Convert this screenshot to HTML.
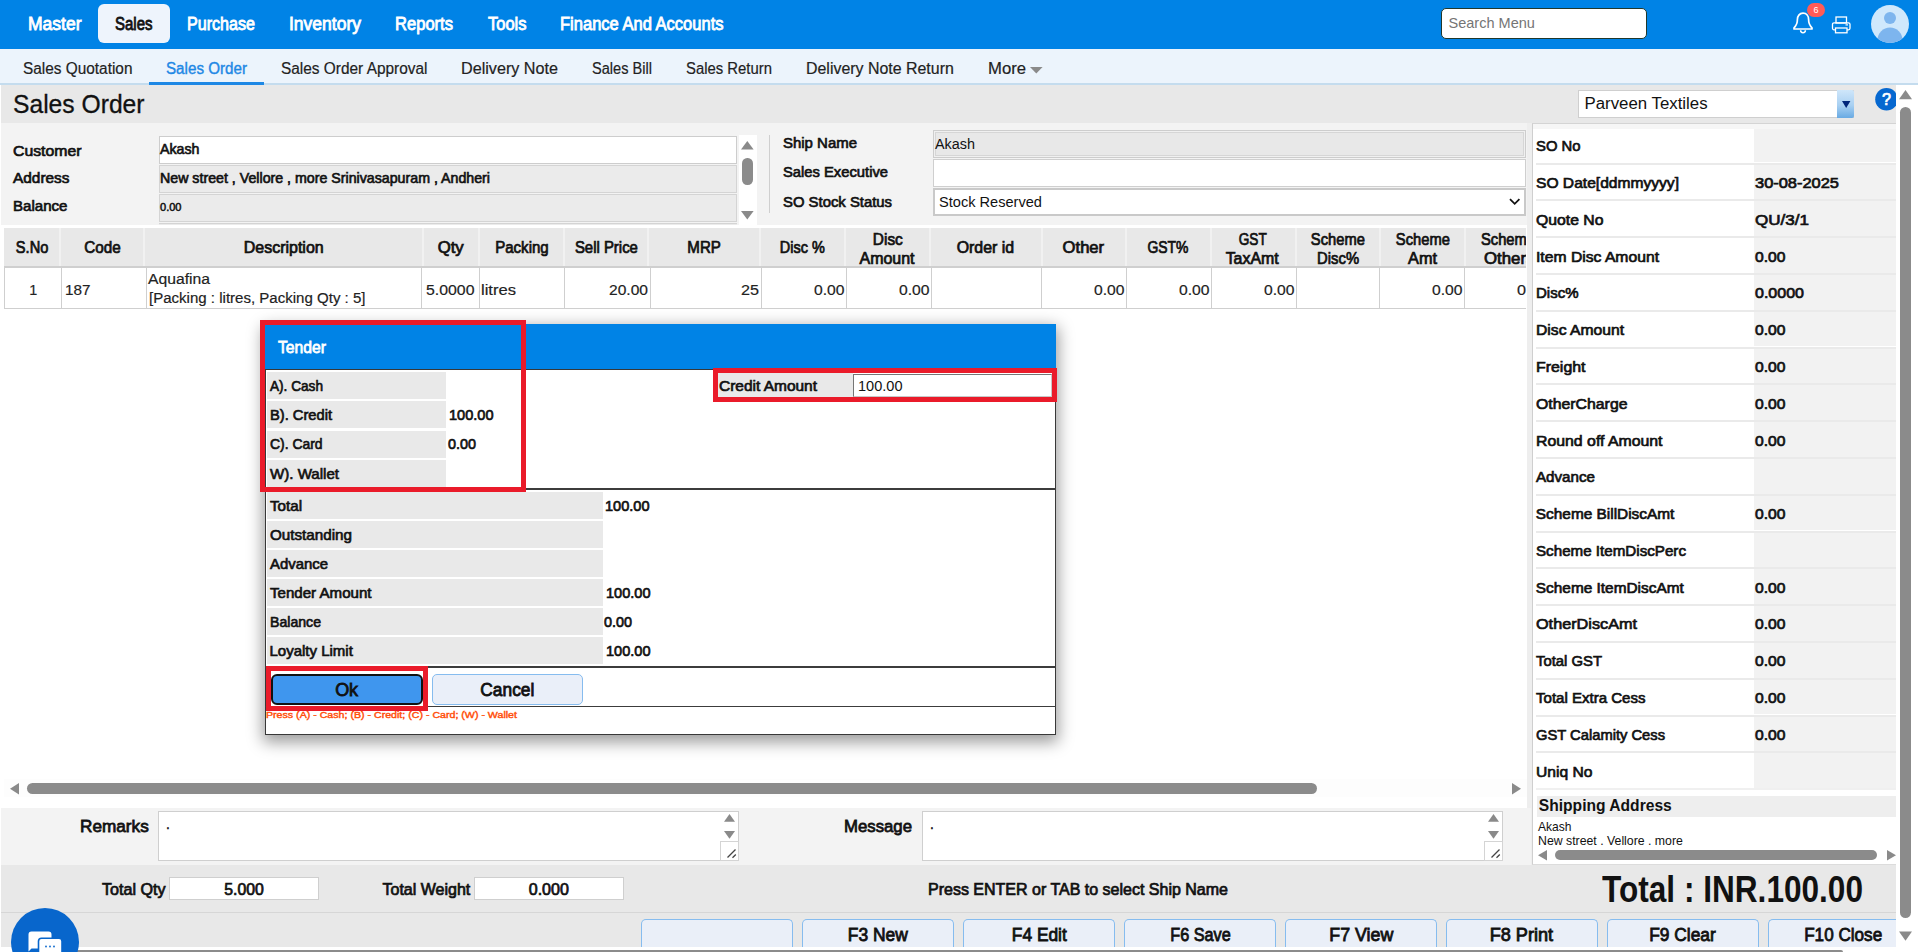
<!DOCTYPE html>
<html><head><meta charset="utf-8"><title>Sales Order</title>
<style>
html,body{margin:0;padding:0;}
body{width:1918px;height:952px;overflow:hidden;position:relative;background:#fff;font-family:"Liberation Sans",sans-serif;}
.a{position:absolute;box-sizing:border-box;}
.t{position:absolute;white-space:nowrap;}
svg{position:absolute;overflow:visible;}
#modal{position:absolute;left:0;top:0;}
</style></head><body>
<!-- top bar -->
<div class="a" style="left:0;top:0;width:1918px;height:48.6px;background:#0083E6"></div>
<div class="a" style="left:98px;top:4px;width:72px;height:39px;border-radius:6px;background:#EEF4FC"></div>
<div class="a" style="left:1441px;top:8px;width:205.5px;height:30.5px;border-radius:5px;background:#fff;border:1px solid #20382c"></div>

<svg style="left:1792px;top:11px" width="22" height="24" viewBox="0 0 22 24"><path d="M11 2.2c-3.6 0-5.6 2.9-5.6 6.4 0 4.6-1.6 6.6-3.4 8.2v1.2h18v-1.2c-1.8-1.6-3.4-3.600-3.400-8.200 0-3.500-2-6.400-5.600-6.400z" fill="none" stroke="#fff" stroke-width="1.7" stroke-linejoin="round"/><path d="M8.600 19.300a2.400 2.400 0 0 0 4.800 0" fill="none" stroke="#fff" stroke-width="1.5"/></svg>
<div class="a" style="left:1807px;top:3px;width:18px;height:14px;border-radius:7px;background:#FF5B57"></div>
<svg style="left:1831px;top:15px" width="21" height="20" viewBox="0 0 21 20"><rect x="5" y="2" width="10.500" height="6" fill="none" stroke="#fff" stroke-width="1.300"/><rect x="1.500" y="7.800" width="17.500" height="7" rx="1.500" fill="none" stroke="#fff" stroke-width="1.300"/><rect x="4.500" y="13" width="11.500" height="4.800" fill="#0083E6" stroke="#fff" stroke-width="1.300"/><rect x="14.500" y="9.300" width="2.500" height="1.200" fill="#fff"/></svg>
<svg style="left:1871px;top:5px" width="38" height="38" viewBox="0 0 38 38"><defs><clipPath id="av"><circle cx="19" cy="19" r="19"/></clipPath></defs><circle cx="19" cy="19" r="19" fill="#CFE8FC"/><g clip-path="url(#av)"><circle cx="19" cy="13" r="6" fill="#7DB5EE"/><ellipse cx="19" cy="35" rx="12.500" ry="12.500" fill="#7DB5EE"/></g></svg>

<!-- submenu -->
<div class="a" style="left:0;top:48.6px;width:1918px;height:35.4px;background:#ECF4FC"></div>
<div class="a" style="left:0;top:83px;width:1918px;height:1.6px;background:#C4DCEE"></div>
<div class="a" style="left:149px;top:82px;width:115px;height:2.8px;background:#1E88E5"></div>
<svg style="left:1030px;top:66.6px" width="13" height="7"><path d="M0 0H12.6L6.3 6.6Z" fill="#8a8a8a"/></svg>
<!-- title band -->
<div class="a" style="left:1px;top:84.8px;width:1895px;height:38px;background:#E8E8E8"></div>
<div class="a" style="left:1896px;top:84.8px;width:22px;height:867.2px;background:#fff;"></div>
<svg style="left:1899px;top:90px" width="13" height="10"><path d="M0 9.200L6.500 0L13 9.200Z" fill="#8a8a8a"/></svg>
<div class="a" style="left:1900px;top:107px;width:11px;height:810.5px;background:#8B8B8B;border-radius:5.500px;"></div>
<svg style="left:1899px;top:931px" width="13" height="10"><path d="M0 0.500H13L6.500 9.700Z" fill="#8a8a8a"/></svg>
<div class="a" style="left:1578px;top:90px;width:276px;height:27.5px;background:#fff;border:1px solid #cfcfcf;"></div>
<div class="a" style="left:1836.5px;top:90px;width:17.5px;height:28px;background:linear-gradient(#cfe6fa,#a8d0f2 55%,#68aae3);border-radius:0 2px 2px 0;"></div>
<svg style="left:1841.500px;top:101px" width="9" height="7"><path d="M0 0H8.400L4.200 7Z" fill="#00267a"/></svg>
<svg style="left:1875px;top:88px;overflow:hidden" width="21" height="23" viewBox="0 0 21 23"><circle cx="11.500" cy="11.300" r="11.300" fill="#0668D0"/></svg>
<div class="a" style="left:1px;top:122.8px;width:1530px;height:102.2px;background:#F3F3F3;"></div>
<div class="a" style="left:1527px;top:122.8px;width:4.5px;height:742.2px;background:#EEEEEE;"></div>
<div class="a" style="left:159px;top:136px;width:578px;height:27.5px;background:#fff;border:1px solid #cdcdcd;"></div>
<div class="a" style="left:159px;top:165px;width:578px;height:27.5px;background:#EBEBEB;border:1px solid #d4d4d4;"></div>
<div class="a" style="left:159px;top:194px;width:578px;height:27.5px;background:#EBEBEB;border:1px solid #d4d4d4;"></div>
<div class="a" style="left:159px;top:222.5px;width:578px;height:2.5px;background:#EBEBEB;border-top:1px solid #d4d4d4;"></div>
<div class="a" style="left:739px;top:135px;width:17.5px;height:90px;background:#fff;"></div>
<svg style="left:741px;top:141px" width="13" height="9"><path d="M0 8.600L6.300 0L12.600 8.600Z" fill="#8a8a8a"/></svg>
<div class="a" style="left:742px;top:158px;width:10.5px;height:26.5px;background:#8B8B8B;border-radius:5.200px;"></div>
<svg style="left:741px;top:210.500px" width="13" height="9"><path d="M0 0H12.600L6.300 8.600Z" fill="#8a8a8a"/></svg>
<div class="a" style="left:768.5px;top:135px;width:1.3px;height:77.5px;background:#cfcfcf;"></div>
<div class="a" style="left:933px;top:130px;width:593px;height:27.5px;background:#E8E8E8;border:1px solid #cdcdcd;box-shadow:inset 0 0 0 1px #f0f0f0, inset 0 0 0 2px #d6d6d6;"></div>
<div class="a" style="left:933px;top:159px;width:593px;height:28px;background:#fff;border:1px solid #cfcfcf;"></div>
<div class="a" style="left:933px;top:188px;width:593px;height:28px;background:#fff;border:2px solid #c9c9c9;"></div>
<svg style="left:1508.500px;top:198px" width="12" height="8"><path d="M1 1.200L5.700 5.800L10.400 1.200" fill="none" stroke="#111" stroke-width="1.800"/></svg>
<div class="a" style="left:4px;top:228px;width:1522px;height:38px;background:#E8E8E8;"></div>
<div class="a" style="left:4px;top:265.5px;width:1522px;height:1.5px;background:#cfcfcf;"></div>
<div class="a" style="left:59px;top:228px;width:2px;height:37.5px;background:#f1f1f1;"></div>
<div class="a" style="left:143px;top:228px;width:2px;height:37.5px;background:#f1f1f1;"></div>
<div class="a" style="left:422px;top:228px;width:2px;height:37.5px;background:#f1f1f1;"></div>
<div class="a" style="left:478px;top:228px;width:2px;height:37.5px;background:#f1f1f1;"></div>
<div class="a" style="left:563px;top:228px;width:2px;height:37.5px;background:#f1f1f1;"></div>
<div class="a" style="left:647px;top:228px;width:2px;height:37.5px;background:#f1f1f1;"></div>
<div class="a" style="left:759px;top:228px;width:2px;height:37.5px;background:#f1f1f1;"></div>
<div class="a" style="left:844px;top:228px;width:2px;height:37.5px;background:#f1f1f1;"></div>
<div class="a" style="left:929px;top:228px;width:2px;height:37.5px;background:#f1f1f1;"></div>
<div class="a" style="left:1041px;top:228px;width:2px;height:37.5px;background:#f1f1f1;"></div>
<div class="a" style="left:1125px;top:228px;width:2px;height:37.5px;background:#f1f1f1;"></div>
<div class="a" style="left:1210px;top:228px;width:2px;height:37.5px;background:#f1f1f1;"></div>
<div class="a" style="left:1295px;top:228px;width:2px;height:37.5px;background:#f1f1f1;"></div>
<div class="a" style="left:1379px;top:228px;width:2px;height:37.5px;background:#f1f1f1;"></div>
<div class="a" style="left:1464px;top:228px;width:2px;height:37.5px;background:#f1f1f1;"></div>
<div class="a" style="left:4px;top:267px;width:1522px;height:41.5px;background:#fff;border-bottom:1px solid #cfcfcf;border-top:1px solid #cfcfcf;"></div>
<div class="a" style="left:4px;top:267px;width:1px;height:41.5px;background:#cfcfcf;"></div>
<div class="a" style="left:61px;top:267px;width:1px;height:41.5px;background:#cfcfcf;"></div>
<div class="a" style="left:146px;top:267px;width:1px;height:41.5px;background:#cfcfcf;"></div>
<div class="a" style="left:420.5px;top:267px;width:1px;height:41.5px;background:#cfcfcf;"></div>
<div class="a" style="left:479px;top:267px;width:1px;height:41.5px;background:#cfcfcf;"></div>
<div class="a" style="left:564px;top:267px;width:1px;height:41.5px;background:#cfcfcf;"></div>
<div class="a" style="left:650px;top:267px;width:1px;height:41.5px;background:#cfcfcf;"></div>
<div class="a" style="left:761px;top:267px;width:1px;height:41.5px;background:#cfcfcf;"></div>
<div class="a" style="left:846px;top:267px;width:1px;height:41.5px;background:#cfcfcf;"></div>
<div class="a" style="left:931px;top:267px;width:1px;height:41.5px;background:#cfcfcf;"></div>
<div class="a" style="left:1041px;top:267px;width:1px;height:41.5px;background:#cfcfcf;"></div>
<div class="a" style="left:1126px;top:267px;width:1px;height:41.5px;background:#cfcfcf;"></div>
<div class="a" style="left:1211px;top:267px;width:1px;height:41.5px;background:#cfcfcf;"></div>
<div class="a" style="left:1296px;top:267px;width:1px;height:41.5px;background:#cfcfcf;"></div>
<div class="a" style="left:1379px;top:267px;width:1px;height:41.5px;background:#cfcfcf;"></div>
<div class="a" style="left:1464px;top:267px;width:1px;height:41.5px;background:#cfcfcf;"></div>
<div class="a" style="left:1531.5px;top:123px;width:364.5px;height:742px;background:#fff;border-left:1px solid #cfcfcf;border-bottom:1px solid #dcdcdc;border-top:1px solid #d4d4d4;"></div>
<div class="a" style="left:1532.5px;top:123.5px;width:363.5px;height:5.5px;background:#F6F6F6;"></div>
<div class="a" style="left:1536px;top:128.8px;width:218px;height:33.7px;background:#fff;"></div>
<div class="a" style="left:1754px;top:128.8px;width:142px;height:33.7px;background:#F2F2F2;"></div>
<div class="a" style="left:1536px;top:162.5px;width:360px;height:2px;background:#EAEAEA;"></div>
<div class="a" style="left:1536px;top:164.5px;width:218px;height:34.8px;background:#fff;"></div>
<div class="a" style="left:1754px;top:164.5px;width:142px;height:34.8px;background:#F2F2F2;"></div>
<div class="a" style="left:1536px;top:199.3px;width:360px;height:2px;background:#EAEAEA;"></div>
<div class="a" style="left:1536px;top:201.3px;width:218px;height:34.8px;background:#fff;"></div>
<div class="a" style="left:1754px;top:201.3px;width:142px;height:34.8px;background:#F2F2F2;"></div>
<div class="a" style="left:1536px;top:236.1px;width:360px;height:2px;background:#EAEAEA;"></div>
<div class="a" style="left:1536px;top:238.1px;width:218px;height:34.8px;background:#fff;"></div>
<div class="a" style="left:1754px;top:238.1px;width:142px;height:34.8px;background:#F2F2F2;"></div>
<div class="a" style="left:1536px;top:272.9px;width:360px;height:2px;background:#EAEAEA;"></div>
<div class="a" style="left:1536px;top:274.9px;width:218px;height:34.8px;background:#fff;"></div>
<div class="a" style="left:1754px;top:274.9px;width:142px;height:34.8px;background:#F2F2F2;"></div>
<div class="a" style="left:1536px;top:309.7px;width:360px;height:2px;background:#EAEAEA;"></div>
<div class="a" style="left:1536px;top:311.7px;width:218px;height:34.8px;background:#fff;"></div>
<div class="a" style="left:1754px;top:311.7px;width:142px;height:34.8px;background:#F2F2F2;"></div>
<div class="a" style="left:1536px;top:346.5px;width:360px;height:2px;background:#EAEAEA;"></div>
<div class="a" style="left:1536px;top:348.5px;width:218px;height:34.8px;background:#fff;"></div>
<div class="a" style="left:1754px;top:348.5px;width:142px;height:34.8px;background:#F2F2F2;"></div>
<div class="a" style="left:1536px;top:383.3px;width:360px;height:2px;background:#EAEAEA;"></div>
<div class="a" style="left:1536px;top:385.3px;width:218px;height:34.8px;background:#fff;"></div>
<div class="a" style="left:1754px;top:385.3px;width:142px;height:34.8px;background:#F2F2F2;"></div>
<div class="a" style="left:1536px;top:420.1px;width:360px;height:2px;background:#EAEAEA;"></div>
<div class="a" style="left:1536px;top:422.1px;width:218px;height:34.8px;background:#fff;"></div>
<div class="a" style="left:1754px;top:422.1px;width:142px;height:34.8px;background:#F2F2F2;"></div>
<div class="a" style="left:1536px;top:456.9px;width:360px;height:2px;background:#EAEAEA;"></div>
<div class="a" style="left:1536px;top:458.9px;width:218px;height:34.8px;background:#fff;"></div>
<div class="a" style="left:1754px;top:458.9px;width:142px;height:34.8px;background:#F2F2F2;"></div>
<div class="a" style="left:1536px;top:493.7px;width:360px;height:2px;background:#EAEAEA;"></div>
<div class="a" style="left:1536px;top:495.7px;width:218px;height:34.8px;background:#fff;"></div>
<div class="a" style="left:1754px;top:495.7px;width:142px;height:34.8px;background:#F2F2F2;"></div>
<div class="a" style="left:1536px;top:530.5px;width:360px;height:2px;background:#EAEAEA;"></div>
<div class="a" style="left:1536px;top:532.5px;width:218px;height:34.8px;background:#fff;"></div>
<div class="a" style="left:1754px;top:532.5px;width:142px;height:34.8px;background:#F2F2F2;"></div>
<div class="a" style="left:1536px;top:567.3px;width:360px;height:2px;background:#EAEAEA;"></div>
<div class="a" style="left:1536px;top:569.3px;width:218px;height:34.8px;background:#fff;"></div>
<div class="a" style="left:1754px;top:569.3px;width:142px;height:34.8px;background:#F2F2F2;"></div>
<div class="a" style="left:1536px;top:604.1px;width:360px;height:2px;background:#EAEAEA;"></div>
<div class="a" style="left:1536px;top:606.1px;width:218px;height:34.8px;background:#fff;"></div>
<div class="a" style="left:1754px;top:606.1px;width:142px;height:34.8px;background:#F2F2F2;"></div>
<div class="a" style="left:1536px;top:640.9px;width:360px;height:2px;background:#EAEAEA;"></div>
<div class="a" style="left:1536px;top:642.9px;width:218px;height:34.8px;background:#fff;"></div>
<div class="a" style="left:1754px;top:642.9px;width:142px;height:34.8px;background:#F2F2F2;"></div>
<div class="a" style="left:1536px;top:677.7px;width:360px;height:2px;background:#EAEAEA;"></div>
<div class="a" style="left:1536px;top:679.7px;width:218px;height:34.8px;background:#fff;"></div>
<div class="a" style="left:1754px;top:679.7px;width:142px;height:34.8px;background:#F2F2F2;"></div>
<div class="a" style="left:1536px;top:714.5px;width:360px;height:2px;background:#EAEAEA;"></div>
<div class="a" style="left:1536px;top:716.5px;width:218px;height:34.8px;background:#fff;"></div>
<div class="a" style="left:1754px;top:716.5px;width:142px;height:34.8px;background:#F2F2F2;"></div>
<div class="a" style="left:1536px;top:751.3px;width:360px;height:2px;background:#EAEAEA;"></div>
<div class="a" style="left:1536px;top:753.3px;width:218px;height:34.8px;background:#fff;"></div>
<div class="a" style="left:1754px;top:753.3px;width:142px;height:34.8px;background:#F2F2F2;"></div>
<div class="a" style="left:1536px;top:788.1px;width:360px;height:2px;background:#F0F0F0;"></div>
<div class="a" style="left:1536.5px;top:795.8px;width:359.5px;height:21.2px;background:#EEEEEE;"></div>
<svg style="left:1538px;top:849.500px" width="10" height="11"><path d="M9 0V10.500L0 5.250Z" fill="#8a8a8a"/></svg>
<div class="a" style="left:1554.8px;top:849.5px;width:322px;height:10.5px;background:#8B8B8B;border-radius:5.200px;"></div>
<svg style="left:1886.800px;top:849.500px" width="10" height="11"><path d="M0 0V10.500L9 5.250Z" fill="#8a8a8a"/></svg>
<div class="a" style="left:4px;top:779px;width:1523px;height:18px;background:#FDFDFD;"></div>
<svg style="left:10px;top:783px" width="10" height="12"><path d="M9 0V11.500L0 5.750Z" fill="#8a8a8a"/></svg>
<div class="a" style="left:27px;top:783px;width:1290px;height:11.3px;background:#8B8B8B;border-radius:5.600px;"></div>
<svg style="left:1512px;top:783px" width="10" height="12"><path d="M0 0V11.500L9 5.750Z" fill="#8a8a8a"/></svg>
<div class="a" style="left:1px;top:808px;width:1530px;height:56.5px;background:#F3F3F3;"></div>
<div class="a" style="left:158px;top:811px;width:581px;height:49.5px;background:#fff;border:1px solid #cfcfcf;"></div>
<svg style="left:723.5px;top:813.500px" width="12" height="8"><path d="M0 7.800L5.500 0L11 7.800Z" fill="#8a8a8a"/></svg>
<svg style="left:723.5px;top:830.500px" width="12" height="8"><path d="M0 0H11L5.500 7.800Z" fill="#8a8a8a"/></svg>
<div class="a" style="left:720px;top:841px;width:19px;height:19.5px;background:#fff;border:1px solid #d4d4d4;"></div>
<svg style="left:726px;top:848px" width="12" height="12"><path d="M1.500 9.500L9.500 1.500M6.500 9.800L9.800 6.500" stroke="#444" stroke-width="1.300" fill="none"/></svg>
<div class="a" style="left:922px;top:811px;width:581px;height:49.5px;background:#fff;border:1px solid #cfcfcf;"></div>
<svg style="left:1487.5px;top:813.500px" width="12" height="8"><path d="M0 7.800L5.500 0L11 7.800Z" fill="#8a8a8a"/></svg>
<svg style="left:1487.5px;top:830.500px" width="12" height="8"><path d="M0 0H11L5.500 7.800Z" fill="#8a8a8a"/></svg>
<div class="a" style="left:1484px;top:841px;width:19px;height:19.5px;background:#fff;border:1px solid #d4d4d4;"></div>
<svg style="left:1490px;top:848px" width="12" height="12"><path d="M1.500 9.500L9.500 1.500M6.500 9.800L9.800 6.500" stroke="#444" stroke-width="1.300" fill="none"/></svg>
<div class="a" style="left:1px;top:864.5px;width:1895px;height:82.5px;background:#E8E8E8;"></div>
<div class="a" style="left:1px;top:912px;width:1895px;height:1px;background:#d6d6d6;"></div>
<div class="a" style="left:169px;top:877px;width:149.5px;height:22.5px;background:#fff;border:1px solid #cfcfcf;"></div>
<div class="a" style="left:474px;top:877px;width:149.5px;height:22.5px;background:#fff;border:1px solid #cfcfcf;"></div>
<div class="a" style="left:641px;top:919px;width:151.5px;height:27.5px;background:#EAEFF8;border:1px solid #86BCEF;border-bottom:none;border-radius:5px 5px 0 0;"></div>
<div class="a" style="left:802px;top:919px;width:151.5px;height:27.5px;background:#EAEFF8;border:1px solid #86BCEF;border-bottom:none;border-radius:5px 5px 0 0;"></div>
<div class="a" style="left:963px;top:919px;width:151.5px;height:27.5px;background:#EAEFF8;border:1px solid #86BCEF;border-bottom:none;border-radius:5px 5px 0 0;"></div>
<div class="a" style="left:1124px;top:919px;width:151.5px;height:27.5px;background:#EAEFF8;border:1px solid #86BCEF;border-bottom:none;border-radius:5px 5px 0 0;"></div>
<div class="a" style="left:1285px;top:919px;width:151.5px;height:27.5px;background:#EAEFF8;border:1px solid #86BCEF;border-bottom:none;border-radius:5px 5px 0 0;"></div>
<div class="a" style="left:1446px;top:919px;width:151.5px;height:27.5px;background:#EAEFF8;border:1px solid #86BCEF;border-bottom:none;border-radius:5px 5px 0 0;"></div>
<div class="a" style="left:1607px;top:919px;width:151.5px;height:27.5px;background:#EAEFF8;border:1px solid #86BCEF;border-bottom:none;border-radius:5px 5px 0 0;"></div>
<div class="a" style="left:1768px;top:919px;width:128px;height:27.5px;background:#EAEFF8;border:1px solid #86BCEF;border-bottom:none;border-right:none;border-radius:5px 0 0 0;"></div>
<div class="a" style="left:0px;top:947px;width:1896px;height:5px;background:#fff;"></div>
<div class="a" style="left:60px;top:950px;width:1783px;height:2px;background:#8B8B8B;border-radius:3px 3px 0 0;"></div>
<div class="t" style="left:28.00px;top:13.00px;font:400 18px/22px 'Liberation Sans';color:#fff;-webkit-text-stroke:0.81px #fff;transform:scaleX(0.9725);transform-origin:0 50%;">Master</div>
<div class="t" style="left:115.00px;top:13.00px;font:400 18px/22px 'Liberation Sans';color:#111;-webkit-text-stroke:0.81px #111;transform:scaleX(0.8328);transform-origin:0 50%;">Sales</div>
<div class="t" style="left:187.00px;top:13.00px;font:400 18px/22px 'Liberation Sans';color:#fff;-webkit-text-stroke:0.81px #fff;transform:scaleX(0.8942);transform-origin:0 50%;">Purchase</div>
<div class="t" style="left:289.00px;top:13.00px;font:400 18px/22px 'Liberation Sans';color:#fff;-webkit-text-stroke:0.81px #fff;transform:scaleX(0.9724);transform-origin:0 50%;">Inventory</div>
<div class="t" style="left:395.00px;top:13.00px;font:400 18px/22px 'Liberation Sans';color:#fff;-webkit-text-stroke:0.81px #fff;transform:scaleX(0.9202);transform-origin:0 50%;">Reports</div>
<div class="t" style="left:487.50px;top:13.00px;font:400 18px/22px 'Liberation Sans';color:#fff;-webkit-text-stroke:0.81px #fff;transform:scaleX(0.9160);transform-origin:0 50%;">Tools</div>
<div class="t" style="left:559.50px;top:13.00px;font:400 18px/22px 'Liberation Sans';color:#fff;-webkit-text-stroke:0.81px #fff;transform:scaleX(0.9179);transform-origin:0 50%;">Finance And Accounts</div>
<div class="t" style="left:1448.50px;top:14.50px;font:400 14.54px/17px 'Liberation Sans';color:#757575;">Search Menu</div>
<div class="t" style="left:1813.49px;top:4.80px;font:400 9px/11px 'Liberation Sans';color:#fff;">6</div>
<div class="t" style="left:22.50px;top:59.00px;font:400 15.8px/19px 'Liberation Sans';color:#222;-webkit-text-stroke:0.19px #222;transform:scaleX(0.9740);transform-origin:0 50%;">Sales Quotation</div>
<div class="t" style="left:166.00px;top:59.00px;font:400 15.8px/19px 'Liberation Sans';color:#1E88E5;-webkit-text-stroke:0.4px #1E88E5;transform:scaleX(0.9609);transform-origin:0 50%;">Sales Order</div>
<div class="t" style="left:280.50px;top:59.00px;font:400 15.8px/19px 'Liberation Sans';color:#222;-webkit-text-stroke:0.19px #222;transform:scaleX(0.9757);transform-origin:0 50%;">Sales Order Approval</div>
<div class="t" style="left:461.00px;top:59.00px;font:400 15.8px/19px 'Liberation Sans';color:#222;-webkit-text-stroke:0.19px #222;transform:scaleX(1.0231);transform-origin:0 50%;">Delivery Note</div>
<div class="t" style="left:592.00px;top:59.00px;font:400 15.8px/19px 'Liberation Sans';color:#222;-webkit-text-stroke:0.19px #222;transform:scaleX(0.9233);transform-origin:0 50%;">Sales Bill</div>
<div class="t" style="left:686.00px;top:59.00px;font:400 15.8px/19px 'Liberation Sans';color:#222;-webkit-text-stroke:0.19px #222;transform:scaleX(0.9417);transform-origin:0 50%;">Sales Return</div>
<div class="t" style="left:806.00px;top:59.00px;font:400 15.8px/19px 'Liberation Sans';color:#222;-webkit-text-stroke:0.19px #222;transform:scaleX(1.0080);transform-origin:0 50%;">Delivery Note Return</div>
<div class="t" style="left:988.00px;top:59.00px;font:400 15.8px/19px 'Liberation Sans';color:#222;-webkit-text-stroke:0.19px #222;transform:scaleX(1.0556);transform-origin:0 50%;">More</div>
<div class="t" style="left:12.50px;top:88.30px;font:400 26.7px/32px 'Liberation Sans';color:#111;-webkit-text-stroke:0.32px #111;transform:scaleX(0.9235);transform-origin:0 50%;">Sales Order</div>
<div class="t" style="left:1584.50px;top:93.50px;font:400 16.82px/20px 'Liberation Sans';color:#111;">Parveen Textiles</div>
<div class="t" style="left:1882.05px;top:90.00px;font:400 16px/19px 'Liberation Sans';color:#fff;-webkit-text-stroke:0.72px #fff;">?</div>
<div class="t" style="left:13.00px;top:141.60px;font:400 15.4px/18px 'Liberation Sans';color:#111;-webkit-text-stroke:0.693px #111;transform:scaleX(1.0267);transform-origin:0 50%;">Customer</div>
<div class="t" style="left:13.00px;top:169.00px;font:400 15.4px/18px 'Liberation Sans';color:#111;-webkit-text-stroke:0.693px #111;">Address</div>
<div class="t" style="left:13.00px;top:197.40px;font:400 15.4px/18px 'Liberation Sans';color:#111;-webkit-text-stroke:0.693px #111;transform:scaleX(0.9798);transform-origin:0 50%;">Balance</div>
<div class="t" style="left:160.00px;top:141.20px;font:400 14.5px/17px 'Liberation Sans';color:#111;-webkit-text-stroke:0.652px #111;transform:scaleX(0.9798);transform-origin:0 50%;">Akash</div>
<div class="t" style="left:160.00px;top:170.00px;font:400 14.5px/17px 'Liberation Sans';color:#111;-webkit-text-stroke:0.652px #111;transform:scaleX(0.9796);transform-origin:0 50%;">New street , Vellore , more Srinivasapuram , Andheri</div>
<div class="t" style="left:160.00px;top:201.10px;font:400 11.2px/13px 'Liberation Sans';color:#111;-webkit-text-stroke:0.504px #111;transform:scaleX(0.9871);transform-origin:0 50%;">0.00</div>
<div class="t" style="left:783.00px;top:133.80px;font:400 15.4px/18px 'Liberation Sans';color:#111;-webkit-text-stroke:0.693px #111;transform:scaleX(0.9719);transform-origin:0 50%;">Ship Name</div>
<div class="t" style="left:783.00px;top:162.60px;font:400 15.4px/18px 'Liberation Sans';color:#111;-webkit-text-stroke:0.693px #111;transform:scaleX(0.9588);transform-origin:0 50%;">Sales Executive</div>
<div class="t" style="left:783.00px;top:192.50px;font:400 15.4px/18px 'Liberation Sans';color:#111;-webkit-text-stroke:0.693px #111;transform:scaleX(0.9653);transform-origin:0 50%;">SO Stock Status</div>
<div class="t" style="left:935.00px;top:136.00px;font:400 14.39px/17px 'Liberation Sans';color:#111;">Akash</div>
<div class="t" style="left:939.00px;top:192.80px;font:400 14.59px/18px 'Liberation Sans';color:#111;">Stock Reserved</div>
<div class="t" style="left:13.90px;top:237.30px;font:400 16.3px/20px 'Liberation Sans';color:#111;-webkit-text-stroke:0.734px #111;transform:scaleX(0.8977);transform-origin:50% 50%;">S.No</div>
<div class="t" style="left:83.03px;top:237.30px;font:400 16.3px/20px 'Liberation Sans';color:#111;-webkit-text-stroke:0.734px #111;transform:scaleX(0.9374);transform-origin:50% 50%;">Code</div>
<div class="t" style="left:242.97px;top:237.30px;font:400 16.3px/20px 'Liberation Sans';color:#111;-webkit-text-stroke:0.734px #111;transform:scaleX(0.9822);transform-origin:50% 50%;">Description</div>
<div class="t" style="left:438.33px;top:237.30px;font:400 16.3px/20px 'Liberation Sans';color:#111;-webkit-text-stroke:0.734px #111;transform:scaleX(1.0259);transform-origin:50% 50%;">Qty</div>
<div class="t" style="left:493.23px;top:237.30px;font:400 16.3px/20px 'Liberation Sans';color:#111;-webkit-text-stroke:0.734px #111;transform:scaleX(0.9234);transform-origin:50% 50%;">Packing</div>
<div class="t" style="left:572.11px;top:237.30px;font:400 16.3px/20px 'Liberation Sans';color:#111;-webkit-text-stroke:0.734px #111;transform:scaleX(0.9159);transform-origin:50% 50%;">Sell Price</div>
<div class="t" style="left:686.11px;top:237.30px;font:400 16.3px/20px 'Liberation Sans';color:#111;-webkit-text-stroke:0.734px #111;transform:scaleX(0.9257);transform-origin:50% 50%;">MRP</div>
<div class="t" style="left:777.16px;top:237.30px;font:400 16.3px/20px 'Liberation Sans';color:#111;-webkit-text-stroke:0.734px #111;transform:scaleX(0.8881);transform-origin:50% 50%;">Disc %</div>
<div class="t" style="left:871.67px;top:228.80px;font:400 16.3px/20px 'Liberation Sans';color:#111;-webkit-text-stroke:0.734px #111;transform:scaleX(0.9477);transform-origin:50% 50%;">Disc</div>
<div class="t" style="left:859.44px;top:247.50px;font:400 16.3px/20px 'Liberation Sans';color:#111;-webkit-text-stroke:0.734px #111;transform:scaleX(0.9800);transform-origin:50% 50%;">Amount</div>
<div class="t" style="left:956.09px;top:237.30px;font:400 16.3px/20px 'Liberation Sans';color:#111;-webkit-text-stroke:0.734px #111;transform:scaleX(0.9774);transform-origin:50% 50%;">Order id</div>
<div class="t" style="left:1063.43px;top:237.30px;font:400 16.3px/20px 'Liberation Sans';color:#111;-webkit-text-stroke:0.734px #111;transform:scaleX(1.0188);transform-origin:50% 50%;">Other</div>
<div class="t" style="left:1144.42px;top:237.30px;font:400 16.3px/20px 'Liberation Sans';color:#111;-webkit-text-stroke:0.734px #111;transform:scaleX(0.8550);transform-origin:50% 50%;">GST%</div>
<div class="t" style="left:1236.26px;top:228.80px;font:400 16.3px/20px 'Liberation Sans';color:#111;-webkit-text-stroke:0.734px #111;transform:scaleX(0.8362);transform-origin:50% 50%;">GST</div>
<div class="t" style="left:1225.36px;top:247.50px;font:400 16.3px/20px 'Liberation Sans';color:#111;-webkit-text-stroke:0.734px #111;transform:scaleX(0.9764);transform-origin:50% 50%;">TaxAmt</div>
<div class="t" style="left:1308.13px;top:228.80px;font:400 16.3px/20px 'Liberation Sans';color:#111;-webkit-text-stroke:0.734px #111;transform:scaleX(0.9040);transform-origin:50% 50%;">Scheme</div>
<div class="t" style="left:1314.93px;top:247.50px;font:400 16.3px/20px 'Liberation Sans';color:#111;-webkit-text-stroke:0.734px #111;transform:scaleX(0.9103);transform-origin:50% 50%;">Disc%</div>
<div class="t" style="left:1392.63px;top:228.80px;font:400 16.3px/20px 'Liberation Sans';color:#111;-webkit-text-stroke:0.734px #111;transform:scaleX(0.9040);transform-origin:50% 50%;">Scheme</div>
<div class="t" style="left:1408.02px;top:247.50px;font:400 16.3px/20px 'Liberation Sans';color:#111;-webkit-text-stroke:0.734px #111;">Amt</div>
<div class="t" style="left:29.39px;top:279.80px;font:400 15.5px/19px 'Liberation Sans';color:#222;-webkit-text-stroke:0.186px #222;transform:scaleX(0.9300);transform-origin:50% 50%;">1</div>
<div class="t" style="left:64.50px;top:279.80px;font:400 15.5px/19px 'Liberation Sans';color:#222;-webkit-text-stroke:0.186px #222;transform:scaleX(0.9855);transform-origin:0 50%;">187</div>
<div class="t" style="left:148.00px;top:269.10px;font:400 15.5px/19px 'Liberation Sans';color:#222;-webkit-text-stroke:0.186px #222;transform:scaleX(1.0130);transform-origin:0 50%;">Aquafina</div>
<div class="t" style="left:148.50px;top:288.40px;font:400 15.5px/19px 'Liberation Sans';color:#222;-webkit-text-stroke:0.186px #222;transform:scaleX(0.9703);transform-origin:0 50%;">[Packing : litres, Packing Qty : 5]</div>
<div class="t" style="left:425.80px;top:279.80px;font:400 15.5px/19px 'Liberation Sans';color:#222;-webkit-text-stroke:0.186px #222;transform:scaleX(1.0227);transform-origin:0 50%;">5.0000</div>
<div class="t" style="left:481.00px;top:279.80px;font:400 15.5px/19px 'Liberation Sans';color:#222;-webkit-text-stroke:0.186px #222;transform:scaleX(1.0692);transform-origin:0 50%;">litres</div>
<div class="t" style="left:608.50px;top:279.80px;font:400 15.5px/19px 'Liberation Sans';color:#222;-webkit-text-stroke:0.186px #222;transform:scaleX(1.0052);transform-origin:0 50%;">20.00</div>
<div class="t" style="left:741.00px;top:279.80px;font:400 15.5px/19px 'Liberation Sans';color:#222;-webkit-text-stroke:0.186px #222;transform:scaleX(1.0435);transform-origin:0 50%;">25</div>
<div class="t" style="left:813.50px;top:279.80px;font:400 15.5px/19px 'Liberation Sans';color:#222;-webkit-text-stroke:0.186px #222;transform:scaleX(1.0109);transform-origin:0 50%;">0.00</div>
<div class="t" style="left:898.50px;top:279.80px;font:400 15.5px/19px 'Liberation Sans';color:#222;-webkit-text-stroke:0.186px #222;transform:scaleX(1.0109);transform-origin:0 50%;">0.00</div>
<div class="t" style="left:1094.00px;top:279.80px;font:400 15.5px/19px 'Liberation Sans';color:#222;-webkit-text-stroke:0.186px #222;transform:scaleX(1.0109);transform-origin:0 50%;">0.00</div>
<div class="t" style="left:1178.80px;top:279.80px;font:400 15.5px/19px 'Liberation Sans';color:#222;-webkit-text-stroke:0.186px #222;transform:scaleX(1.0109);transform-origin:0 50%;">0.00</div>
<div class="t" style="left:1263.50px;top:279.80px;font:400 15.5px/19px 'Liberation Sans';color:#222;-webkit-text-stroke:0.186px #222;transform:scaleX(1.0109);transform-origin:0 50%;">0.00</div>
<div class="t" style="left:1432.20px;top:279.80px;font:400 15.5px/19px 'Liberation Sans';color:#222;-webkit-text-stroke:0.186px #222;transform:scaleX(1.0109);transform-origin:0 50%;">0.00</div>
<div class="t" style="left:1517.20px;top:279.80px;font:400 15.5px/19px 'Liberation Sans';color:#222;-webkit-text-stroke:0.186px #222;transform:scaleX(1.0435);transform-origin:0 50%;">0</div>
<div class="t" style="left:1535.80px;top:137.30px;font:400 15.4px/18px 'Liberation Sans';color:#111;-webkit-text-stroke:0.693px #111;transform:scaleX(0.9635);transform-origin:0 50%;">SO No</div>
<div class="t" style="left:1535.80px;top:174.08px;font:400 15.4px/18px 'Liberation Sans';color:#111;-webkit-text-stroke:0.693px #111;transform:scaleX(1.0133);transform-origin:0 50%;">SO Date[ddmmyyyy]</div>
<div class="t" style="left:1754.50px;top:174.08px;font:400 15.4px/18px 'Liberation Sans';color:#111;-webkit-text-stroke:0.693px #111;transform:scaleX(1.0669);transform-origin:0 50%;">30-08-2025</div>
<div class="t" style="left:1535.80px;top:210.86px;font:400 15.4px/18px 'Liberation Sans';color:#111;-webkit-text-stroke:0.693px #111;transform:scaleX(1.0244);transform-origin:0 50%;">Quote No</div>
<div class="t" style="left:1754.50px;top:210.86px;font:400 15.4px/18px 'Liberation Sans';color:#111;-webkit-text-stroke:0.693px #111;transform:scaleX(1.1073);transform-origin:0 50%;">QU/3/1</div>
<div class="t" style="left:1535.80px;top:247.64px;font:400 15.4px/18px 'Liberation Sans';color:#111;-webkit-text-stroke:0.693px #111;transform:scaleX(1.0198);transform-origin:0 50%;">Item Disc Amount</div>
<div class="t" style="left:1754.50px;top:247.64px;font:400 15.4px/18px 'Liberation Sans';color:#111;-webkit-text-stroke:0.693px #111;transform:scaleX(1.0177);transform-origin:0 50%;">0.00</div>
<div class="t" style="left:1535.80px;top:284.42px;font:400 15.4px/18px 'Liberation Sans';color:#111;-webkit-text-stroke:0.693px #111;transform:scaleX(0.9746);transform-origin:0 50%;">Disc%</div>
<div class="t" style="left:1754.50px;top:284.42px;font:400 15.4px/18px 'Liberation Sans';color:#111;-webkit-text-stroke:0.693px #111;transform:scaleX(1.0408);transform-origin:0 50%;">0.0000</div>
<div class="t" style="left:1535.80px;top:321.20px;font:400 15.4px/18px 'Liberation Sans';color:#111;-webkit-text-stroke:0.693px #111;transform:scaleX(1.0184);transform-origin:0 50%;">Disc Amount</div>
<div class="t" style="left:1754.50px;top:321.20px;font:400 15.4px/18px 'Liberation Sans';color:#111;-webkit-text-stroke:0.693px #111;transform:scaleX(1.0177);transform-origin:0 50%;">0.00</div>
<div class="t" style="left:1535.80px;top:357.98px;font:400 15.4px/18px 'Liberation Sans';color:#111;-webkit-text-stroke:0.693px #111;transform:scaleX(1.0333);transform-origin:0 50%;">Freight</div>
<div class="t" style="left:1754.50px;top:357.98px;font:400 15.4px/18px 'Liberation Sans';color:#111;-webkit-text-stroke:0.693px #111;transform:scaleX(1.0177);transform-origin:0 50%;">0.00</div>
<div class="t" style="left:1535.80px;top:394.76px;font:400 15.4px/18px 'Liberation Sans';color:#111;-webkit-text-stroke:0.693px #111;transform:scaleX(1.0283);transform-origin:0 50%;">OtherCharge</div>
<div class="t" style="left:1754.50px;top:394.76px;font:400 15.4px/18px 'Liberation Sans';color:#111;-webkit-text-stroke:0.693px #111;transform:scaleX(1.0177);transform-origin:0 50%;">0.00</div>
<div class="t" style="left:1535.80px;top:431.54px;font:400 15.4px/18px 'Liberation Sans';color:#111;-webkit-text-stroke:0.693px #111;transform:scaleX(1.0290);transform-origin:0 50%;">Round off Amount</div>
<div class="t" style="left:1754.50px;top:431.54px;font:400 15.4px/18px 'Liberation Sans';color:#111;-webkit-text-stroke:0.693px #111;transform:scaleX(1.0177);transform-origin:0 50%;">0.00</div>
<div class="t" style="left:1535.80px;top:468.32px;font:400 15.4px/18px 'Liberation Sans';color:#111;-webkit-text-stroke:0.693px #111;transform:scaleX(0.9849);transform-origin:0 50%;">Advance</div>
<div class="t" style="left:1535.80px;top:505.10px;font:400 15.4px/18px 'Liberation Sans';color:#111;-webkit-text-stroke:0.693px #111;">Scheme BillDiscAmt</div>
<div class="t" style="left:1754.50px;top:505.10px;font:400 15.4px/18px 'Liberation Sans';color:#111;-webkit-text-stroke:0.693px #111;transform:scaleX(1.0177);transform-origin:0 50%;">0.00</div>
<div class="t" style="left:1535.80px;top:541.88px;font:400 15.4px/18px 'Liberation Sans';color:#111;-webkit-text-stroke:0.693px #111;transform:scaleX(0.9852);transform-origin:0 50%;">Scheme ItemDiscPerc</div>
<div class="t" style="left:1535.80px;top:578.66px;font:400 15.4px/18px 'Liberation Sans';color:#111;-webkit-text-stroke:0.693px #111;">Scheme ItemDiscAmt</div>
<div class="t" style="left:1754.50px;top:578.66px;font:400 15.4px/18px 'Liberation Sans';color:#111;-webkit-text-stroke:0.693px #111;transform:scaleX(1.0177);transform-origin:0 50%;">0.00</div>
<div class="t" style="left:1535.80px;top:615.44px;font:400 15.4px/18px 'Liberation Sans';color:#111;-webkit-text-stroke:0.693px #111;transform:scaleX(1.0545);transform-origin:0 50%;">OtherDiscAmt</div>
<div class="t" style="left:1754.50px;top:615.44px;font:400 15.4px/18px 'Liberation Sans';color:#111;-webkit-text-stroke:0.693px #111;transform:scaleX(1.0177);transform-origin:0 50%;">0.00</div>
<div class="t" style="left:1535.80px;top:652.22px;font:400 15.4px/18px 'Liberation Sans';color:#111;-webkit-text-stroke:0.693px #111;transform:scaleX(0.9644);transform-origin:0 50%;">Total GST</div>
<div class="t" style="left:1754.50px;top:652.22px;font:400 15.4px/18px 'Liberation Sans';color:#111;-webkit-text-stroke:0.693px #111;transform:scaleX(1.0177);transform-origin:0 50%;">0.00</div>
<div class="t" style="left:1535.80px;top:689.00px;font:400 15.4px/18px 'Liberation Sans';color:#111;-webkit-text-stroke:0.693px #111;transform:scaleX(0.9771);transform-origin:0 50%;">Total Extra Cess</div>
<div class="t" style="left:1754.50px;top:689.00px;font:400 15.4px/18px 'Liberation Sans';color:#111;-webkit-text-stroke:0.693px #111;transform:scaleX(1.0177);transform-origin:0 50%;">0.00</div>
<div class="t" style="left:1535.80px;top:725.78px;font:400 15.4px/18px 'Liberation Sans';color:#111;-webkit-text-stroke:0.693px #111;transform:scaleX(0.9567);transform-origin:0 50%;">GST Calamity Cess</div>
<div class="t" style="left:1754.50px;top:725.78px;font:400 15.4px/18px 'Liberation Sans';color:#111;-webkit-text-stroke:0.693px #111;transform:scaleX(1.0177);transform-origin:0 50%;">0.00</div>
<div class="t" style="left:1535.80px;top:762.56px;font:400 15.4px/18px 'Liberation Sans';color:#111;-webkit-text-stroke:0.693px #111;transform:scaleX(1.0160);transform-origin:0 50%;">Uniq No</div>
<div class="t" style="left:1538.80px;top:796.30px;font:700 15.61px/19px 'Liberation Sans';color:#111;">Shipping Address</div>
<div class="t" style="left:1538.00px;top:819.80px;font:400 12.05px/14px 'Liberation Sans';color:#111;">Akash</div>
<div class="t" style="left:1538.00px;top:834.10px;font:400 12.31px/15px 'Liberation Sans';color:#111;">New street . Vellore . more</div>
<div class="t" style="left:80.00px;top:816.00px;font:400 17.2px/21px 'Liberation Sans';color:#111;-webkit-text-stroke:0.774px #111;">Remarks</div>
<div class="t" style="left:844.00px;top:816.00px;font:400 17.2px/21px 'Liberation Sans';color:#111;-webkit-text-stroke:0.774px #111;transform:scaleX(0.9749);transform-origin:0 50%;">Message</div>
<div class="t" style="left:166.20px;top:817.80px;font:400 12px/14px 'Liberation Sans';color:#111;-webkit-text-stroke:0.54px #111;">.</div>
<div class="t" style="left:930.20px;top:817.80px;font:400 12px/14px 'Liberation Sans';color:#111;-webkit-text-stroke:0.54px #111;">.</div>
<div class="t" style="left:102.00px;top:879.90px;font:400 16px/19px 'Liberation Sans';color:#111;-webkit-text-stroke:0.72px #111;transform:scaleX(1.0057);transform-origin:0 50%;">Total Qty</div>
<div class="t" style="left:223.98px;top:879.90px;font:400 16px/19px 'Liberation Sans';color:#111;-webkit-text-stroke:0.72px #111;transform:scaleX(0.9863);transform-origin:50% 50%;">5.000</div>
<div class="t" style="left:382.50px;top:879.90px;font:400 16px/19px 'Liberation Sans';color:#111;-webkit-text-stroke:0.72px #111;">Total Weight</div>
<div class="t" style="left:528.78px;top:879.90px;font:400 16px/19px 'Liberation Sans';color:#111;-webkit-text-stroke:0.72px #111;">0.000</div>
<div class="t" style="left:928.00px;top:879.90px;font:400 16px/19px 'Liberation Sans';color:#111;-webkit-text-stroke:0.72px #111;">Press ENTER or TAB to select Ship Name</div>
<div class="t" style="left:1601.80px;top:867.60px;font:700 36.6px/44px 'Liberation Sans';color:#111;transform:scaleX(0.8637);transform-origin:0 50%;">Total : INR.100.00</div>
<div class="t" style="left:846.12px;top:924.40px;font:400 18.5px/22px 'Liberation Sans';color:#111;-webkit-text-stroke:0.833px #111;transform:scaleX(0.9412);transform-origin:50% 50%;">F3 New</div>
<div class="t" style="left:1009.70px;top:924.40px;font:400 18.5px/22px 'Liberation Sans';color:#111;-webkit-text-stroke:0.833px #111;transform:scaleX(0.9384);transform-origin:50% 50%;">F4 Edit</div>
<div class="t" style="left:1165.55px;top:924.40px;font:400 18.5px/22px 'Liberation Sans';color:#111;-webkit-text-stroke:0.833px #111;transform:scaleX(0.8780);transform-origin:50% 50%;">F6 Save</div>
<div class="t" style="left:1327.75px;top:924.40px;font:400 18.5px/22px 'Liberation Sans';color:#111;-webkit-text-stroke:0.833px #111;transform:scaleX(0.9624);transform-origin:50% 50%;">F7 View</div>
<div class="t" style="left:1489.11px;top:924.40px;font:400 18.5px/22px 'Liberation Sans';color:#111;-webkit-text-stroke:0.833px #111;transform:scaleX(0.9802);transform-origin:50% 50%;">F8 Print</div>
<div class="t" style="left:1647.02px;top:924.40px;font:400 18.5px/22px 'Liberation Sans';color:#111;-webkit-text-stroke:0.833px #111;transform:scaleX(0.9372);transform-origin:50% 50%;">F9 Clear</div>
<div class="t" style="left:1800.84px;top:924.40px;font:400 18.5px/22px 'Liberation Sans';color:#111;-webkit-text-stroke:0.833px #111;transform:scaleX(0.9250);transform-origin:50% 50%;">F10 Close</div>
<div class="a" style="left:0;top:0;width:1526px;height:952px;overflow:hidden"><div class="t" style="left:1480.50px;top:228.80px;font:400 16.3px/20px 'Liberation Sans';color:#111;-webkit-text-stroke:0.734px #111;transform:scaleX(0.9040);transform-origin:0 50%;">Scheme</div>
<div class="t" style="left:1483.80px;top:247.50px;font:400 16.3px/20px 'Liberation Sans';color:#111;-webkit-text-stroke:0.734px #111;transform:scaleX(1.0332);transform-origin:0 50%;">Others</div></div>
<div id="modal">
<div class="a" style="left:264.5px;top:324px;width:791.5px;height:410.6px;background:#fff;box-shadow:0 5px 15px 2px rgba(0,0,0,.40);"></div>
<div class="a" style="left:264.5px;top:324px;width:791.5px;height:45px;background:#0083E6;"></div>
<div class="a" style="left:264.5px;top:369px;width:791.5px;height:365.6px;border:1.600px solid #383838;border-top:1.800px solid #383838;"></div>
<div class="a" style="left:267px;top:372px;width:179px;height:27px;background:#E9E9E9;"></div>
<div class="a" style="left:267px;top:401px;width:179px;height:27px;background:#E9E9E9;"></div>
<div class="a" style="left:267px;top:430.5px;width:179px;height:27px;background:#E9E9E9;"></div>
<div class="a" style="left:267px;top:459.5px;width:179px;height:27px;background:#E9E9E9;"></div>
<div class="a" style="left:264.5px;top:488px;width:791.5px;height:1.6px;background:#3c3c3c;"></div>
<div class="a" style="left:267px;top:491.8px;width:335.5px;height:27px;background:#E9E9E9;"></div>
<div class="a" style="left:267px;top:520.8px;width:335.5px;height:27px;background:#E9E9E9;"></div>
<div class="a" style="left:267px;top:549.8px;width:335.5px;height:27px;background:#E9E9E9;"></div>
<div class="a" style="left:267px;top:578.8px;width:335.5px;height:27px;background:#E9E9E9;"></div>
<div class="a" style="left:267px;top:607.8px;width:335.5px;height:27px;background:#E9E9E9;"></div>
<div class="a" style="left:267px;top:636.8px;width:335.5px;height:27px;background:#E9E9E9;"></div>
<div class="a" style="left:264.5px;top:666px;width:791.5px;height:1.5px;background:#3c3c3c;"></div>
<div class="a" style="left:264.5px;top:705.5px;width:791.5px;height:1.5px;background:#3c3c3c;"></div>
<div class="a" style="left:718px;top:373px;width:135px;height:24px;background:#E9E9E9;"></div>
<div class="a" style="left:853px;top:373.5px;width:199px;height:23px;background:#fff;border:1.500px solid #767676;border-right-color:#c8c8c8;border-bottom-color:#c8c8c8;"></div>
<div class="a" style="left:271px;top:674px;width:151.5px;height:30.5px;background:#3F96EE;border:2px solid #111;border-radius:6px;"></div>
<div class="a" style="left:432px;top:674px;width:151px;height:30.5px;background:#EAEFF9;border:1px solid #86BCEF;border-radius:5px;"></div>
<div class="t" style="left:277.80px;top:338.10px;font:400 17px/20px 'Liberation Sans';color:#fff;-webkit-text-stroke:0.765px #fff;transform:scaleX(0.9234);transform-origin:0 50%;">Tender</div>
<div class="t" style="left:269.50px;top:376.80px;font:400 15px/18px 'Liberation Sans';color:#111;-webkit-text-stroke:0.675px #111;transform:scaleX(0.9082);transform-origin:0 50%;">A). Cash</div>
<div class="t" style="left:269.50px;top:405.50px;font:400 15px/18px 'Liberation Sans';color:#111;-webkit-text-stroke:0.675px #111;transform:scaleX(0.9785);transform-origin:0 50%;">B). Credit</div>
<div class="t" style="left:269.50px;top:434.80px;font:400 15px/18px 'Liberation Sans';color:#111;-webkit-text-stroke:0.675px #111;transform:scaleX(0.9261);transform-origin:0 50%;">C). Card</div>
<div class="t" style="left:269.50px;top:464.80px;font:400 15px/18px 'Liberation Sans';color:#111;-webkit-text-stroke:0.675px #111;transform:scaleX(1.0057);transform-origin:0 50%;">W). Wallet</div>
<div class="t" style="left:448.80px;top:405.50px;font:400 15px/18px 'Liberation Sans';color:#111;-webkit-text-stroke:0.675px #111;transform:scaleX(0.9697);transform-origin:0 50%;">100.00</div>
<div class="t" style="left:448.00px;top:434.80px;font:400 15px/18px 'Liberation Sans';color:#111;-webkit-text-stroke:0.675px #111;transform:scaleX(0.9588);transform-origin:0 50%;">0.00</div>
<div class="t" style="left:719.00px;top:376.50px;font:400 15px/18px 'Liberation Sans';color:#111;-webkit-text-stroke:0.675px #111;transform:scaleX(1.0311);transform-origin:0 50%;">Credit Amount</div>
<div class="t" style="left:858.00px;top:377.50px;font:400 14.55px/17px 'Liberation Sans';color:#111;">100.00</div>
<div class="t" style="left:269.50px;top:496.80px;font:400 15px/18px 'Liberation Sans';color:#111;-webkit-text-stroke:0.675px #111;transform:scaleX(1.0099);transform-origin:0 50%;">Total</div>
<div class="t" style="left:604.50px;top:496.80px;font:400 15px/18px 'Liberation Sans';color:#111;-webkit-text-stroke:0.675px #111;transform:scaleX(0.9697);transform-origin:0 50%;">100.00</div>
<div class="t" style="left:269.50px;top:525.80px;font:400 15px/18px 'Liberation Sans';color:#111;-webkit-text-stroke:0.675px #111;transform:scaleX(1.0137);transform-origin:0 50%;">Outstanding</div>
<div class="t" style="left:269.50px;top:554.80px;font:400 15px/18px 'Liberation Sans';color:#111;-webkit-text-stroke:0.675px #111;transform:scaleX(0.9936);transform-origin:0 50%;">Advance</div>
<div class="t" style="left:269.50px;top:583.80px;font:400 15px/18px 'Liberation Sans';color:#111;-webkit-text-stroke:0.675px #111;transform:scaleX(1.0059);transform-origin:0 50%;">Tender Amount</div>
<div class="t" style="left:606.00px;top:583.80px;font:400 15px/18px 'Liberation Sans';color:#111;-webkit-text-stroke:0.675px #111;transform:scaleX(0.9697);transform-origin:0 50%;">100.00</div>
<div class="t" style="left:269.50px;top:612.80px;font:400 15px/18px 'Liberation Sans';color:#111;-webkit-text-stroke:0.675px #111;transform:scaleX(0.9406);transform-origin:0 50%;">Balance</div>
<div class="t" style="left:604.00px;top:612.80px;font:400 15px/18px 'Liberation Sans';color:#111;-webkit-text-stroke:0.675px #111;transform:scaleX(0.9588);transform-origin:0 50%;">0.00</div>
<div class="t" style="left:269.50px;top:641.80px;font:400 15px/18px 'Liberation Sans';color:#111;-webkit-text-stroke:0.675px #111;">Loyalty Limit</div>
<div class="t" style="left:605.80px;top:641.80px;font:400 15px/18px 'Liberation Sans';color:#111;-webkit-text-stroke:0.675px #111;transform:scaleX(0.9697);transform-origin:0 50%;">100.00</div>
<div class="t" style="left:335.07px;top:679.00px;font:400 18.2px/22px 'Liberation Sans';color:#111;-webkit-text-stroke:0.819px #111;transform:scaleX(0.9892);transform-origin:50% 50%;">Ok</div>
<div class="t" style="left:479.19px;top:679.00px;font:400 18.2px/22px 'Liberation Sans';color:#111;-webkit-text-stroke:0.819px #111;transform:scaleX(0.9536);transform-origin:50% 50%;">Cancel</div>
<div class="t" style="left:266.00px;top:709.20px;font:400 9.5px/11px 'Liberation Sans';color:#FF4F0A;-webkit-text-stroke:0.427px #FF4F0A;transform:scaleX(1.1180);transform-origin:0 50%;">Press (A) - Cash; (B) - Credit; (C) - Card; (W) - Wallet</div>
<div class="a" style="left:260px;top:320px;width:265.5px;height:172px;border:5px solid #EA1B2A;"></div>
<div class="a" style="left:713px;top:368px;width:343.5px;height:34px;border:5px solid #EA1B2A;"></div>
<div class="a" style="left:265.5px;top:666px;width:162.5px;height:44.5px;border:5px solid #EA1B2A;"></div>
</div>
<svg style="left:11px;top:908px" width="68" height="44" viewBox="0 0 68 44"><circle cx="34" cy="34" r="34" fill="#0866CC"/>
<path d="M17.500 26.500a3 3 0 0 1 3-3h17a3 3 0 0 1 3 3v14h-20l-3 3z" fill="#fff"/>
<path d="M27.500 33.200a3 3 0 0 1 3-3h17.500a3 3 0 0 1 3 3v12h-23.500z" fill="#fff" stroke="#0866CC" stroke-width="1.600"/>
<circle cx="35" cy="38.500" r="0.900" fill="#0866CC"/><circle cx="39" cy="38.500" r="0.900" fill="#0866CC"/><circle cx="43" cy="38.500" r="0.900" fill="#0866CC"/></svg>
</body></html>
